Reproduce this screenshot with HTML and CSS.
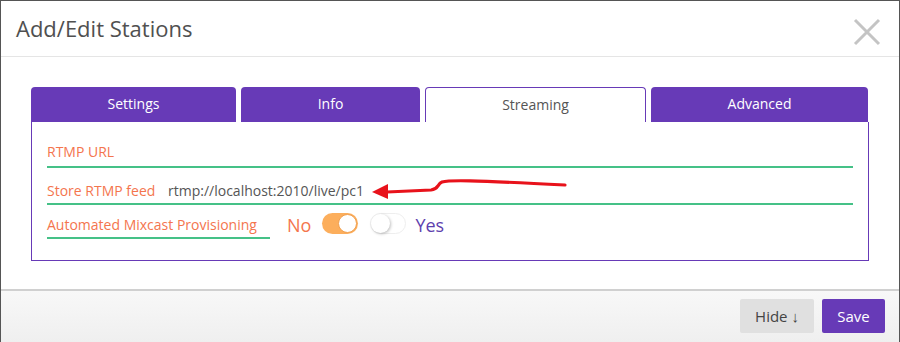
FILE: index.html
```html
<!DOCTYPE html>
<html lang="en">
<head>
  <meta charset="UTF-8" />
  <title>Add/Edit Stations</title>
  <link rel="stylesheet" href="styles.css">
</head>
<body>
  <div class="modal">
    <!-- Header -->
    <div class="modal-header">
      <h1>Add/Edit Stations</h1>
      <svg class="close-icon" width="28" height="28" viewBox="0 0 28 28">
        <path d="M2 2 L26 26 M26 2 L2 26" stroke="#c4c4c4" stroke-width="3" fill="none"/>
      </svg>
    </div>

    <!-- Body -->
    <div class="modal-body">
      <div class="tabs">
        <div class="tab">Settings</div>
        <div class="tab">Info</div>
        <div class="tab active">Streaming</div>
        <div class="tab">Advanced</div>
      </div>
      <div class="panel">
        <div class="field first">
          <span class="field-label">RTMP URL</span>
        </div>
        <div class="field">
          <span class="field-label wide">Store RTMP feed</span>
          <span class="field-value">rtmp://localhost:2010/live/pc1</span>
        </div>
        <div class="switch-row">
          <span class="field-label underline">Automated Mixcast Provisioning</span>
          <span class="opt-no">No</span>
          <span class="toggle on"><span class="knob"></span></span>
          <span class="toggle off"><span class="knob"></span></span>
          <span class="opt-yes">Yes</span>
        </div>
        <!-- hand drawn arrow pointing at the value -->
        <svg class="arrow" width="210" height="30" viewBox="0 0 210 30">
          <path d="M18 21 L62 19 C70 18 68 13 73 11 C80 9 100 9 196 14" stroke="#e8121b" stroke-width="3.2" fill="none" stroke-linecap="round"/>
          <polygon points="3,21 19,13 19,28" fill="#e8121b"/>
        </svg>
      </div>
    </div>

    <!-- Footer -->
    <div class="modal-footer">
      <button class="btn btn-hide">Hide ↓</button>
      <button class="btn btn-save">Save</button>
    </div>
  </div>
</body>
</html>
```

FILE: styles.css
```css
* {
  margin: 0;
  padding: 0;
  box-sizing: border-box;
}
body {
  font-family: 'Open Sans', 'Liberation Sans', sans-serif;
  background-color: #fff;
  width: 900px;
  height: 342px;
  overflow: hidden;
}
.modal {
  border: 1px solid #555;
  border-bottom: none;
  height: 342px;
  background-color: #fff;
  display: flex;
  flex-direction: column;
}
/* Header */
.modal-header {
  height: 56px;
  flex-shrink: 0;
  border-bottom: 1px solid #e5e5e5;
  display: flex;
  align-items: center;
  justify-content: space-between;
  padding: 0 18px 0 15px;
}
.modal-header h1 {
  font-size: 22px;
  font-weight: normal;
  color: #505050;
  margin-top: -2px;
}
.close-icon {
  margin-top: 6px;
}
/* Body */
.modal-body {
  padding: 30px 30px 28px 30px;
}
.tabs {
  display: grid;
  grid-template-columns: 205px 179px 221px 217px;
  gap: 5px;
  height: 35px;
}
.tab {
  background-color: #673ab7;
  color: #fff;
  font-size: 14px;
  border-radius: 4px 4px 0 0;
  display: flex;
  align-items: center;
  justify-content: center;
  padding-bottom: 2px;
}
.tab.active {
  background-color: #fff;
  color: #555;
  border: 1px solid #673ab7;
  border-bottom: none;
}
.panel {
  position: relative;
  width: 838px;
  border: 1px solid #673ab7;
  border-top: none;
  padding: 9px 15px 21px 15px;
}
.field {
  display: flex;
  align-items: center;
  height: 37px;
  padding-top: 10px;
  border-bottom: 2px solid #45c187;
  font-size: 14px;
}
.field.first {
  padding-top: 6px;
}
.field-label {
  color: #f4754e;
  font-size: 14px;
  line-height: 20px;
}
.field-label.wide {
  width: 121px;
}
.field-value {
  color: #555;
  font-size: 14px;
}
.switch-row {
  display: flex;
  align-items: center;
  padding-top: 10px;
}
.field-label.underline {
  width: 223px;
  padding-bottom: 2px;
  border-bottom: 2px solid #45c187;
}
.opt-no {
  color: #f4754e;
  font-size: 18px;
  margin-left: 17px;
  margin-top: -4px;
}
.opt-yes {
  color: #5e3fae;
  font-size: 18px;
  margin-left: 9px;
  margin-top: -4px;
}
.toggle {
  position: relative;
  width: 36px;
  height: 21px;
  border-radius: 11px;
  margin-top: -7px;
}
.toggle.on {
  background-color: #fcae5c;
  margin-left: 11px;
}
.toggle.off {
  background-color: #fff;
  border: 1px solid #eee;
  margin-left: 12px;
}
.knob {
  position: absolute;
  top: 1px;
  width: 19px;
  height: 19px;
  border-radius: 50%;
  background-color: #fff;
}
.toggle.on .knob {
  right: 1px;
  border: 1px solid #f0a050;
}
.toggle.off .knob {
  left: 0;
  top: 0;
  box-shadow: 1px 1px 3px rgba(0, 0, 0, 0.25);
}
.arrow {
  position: absolute;
  left: 337px;
  top: 49px;
}
/* Footer */
.modal-footer {
  flex-grow: 1;
  border-top: 2px solid #d0d0d0;
  background: linear-gradient(#f8f8f8, #efefef);
  display: flex;
  justify-content: flex-end;
  align-items: flex-start;
  gap: 8px;
  padding: 8px 14px 0 0;
}
.btn {
  font-family: 'Open Sans', 'Liberation Sans', sans-serif;
  font-size: 15px;
  height: 34px;
  border: none;
  border-radius: 2px;
}
.btn-hide {
  width: 74px;
  background-color: #e0e0e0;
  color: #444;
}
.btn-save {
  width: 63px;
  background-color: #673ab7;
  color: #fff;
}
```
